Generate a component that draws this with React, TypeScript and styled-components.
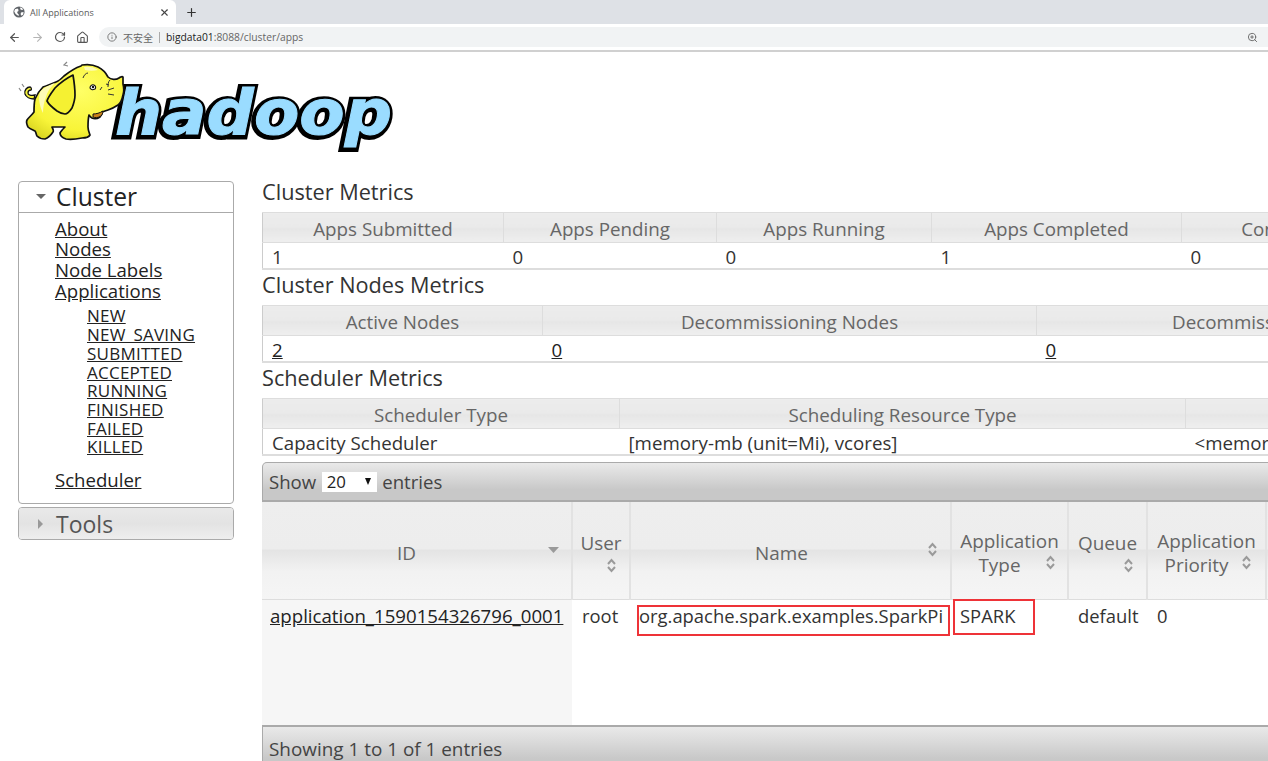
import React from "react";
import styled, { createGlobalStyle } from "styled-components";
import { ArrowLeft, ArrowRight, RotateCw, House, Info, ZoomIn, X, Plus } from "lucide-react";

const Global = createGlobalStyle`
  html, body { margin: 0; padding: 0; background: #fff; overflow: hidden; height: 761px; }
  body { font-family: "Open Sans", "Noto Sans", sans-serif; color: #333; }
`;

const Page = styled.div`
  width: 1268px;
  height: 761px;
  overflow: hidden;
  display: flex;
  flex-direction: column;
`;

const TabStrip = styled.div`
  height: 24px;
  background: #dee1e6;
  display: flex;
  align-items: flex-end;
  padding-left: 4px;
  gap: 9px;
  flex: none;
`;
const Tab = styled.div`
  width: 172px;
  height: 24px;
  background: #fff;
  border-radius: 6px 6px 0 0;
  display: flex;
  align-items: center;
  padding: 0 6px 0 9px;
  box-sizing: border-box;
  gap: 5px;
  font-size: 9px;
  color: #5a5a5a;
`;
const TabTitle = styled.span`
  flex: 1;
  padding-top: 1px;
`;
const NewTab = styled.div`
  height: 24px;
  display: flex;
  align-items: center;
  color: #333;
`;
const Toolbar = styled.div`
  height: 26px;
  flex: none;
  display: flex;
  align-items: center;
  padding: 0 0 0 8px;
  gap: 10px;
  border-bottom: 2px solid #d0d0d0;
  background: #fff;
`;
const NavIcons = styled.div`
  display: flex;
  align-items: center;
  gap: 10px;
  color: #555;
`;
const Omnibox = styled.div`
  flex: 1;
  height: 20px;
  border-radius: 10px 0 0 10px;
  background: #f1f3f4;
  display: flex;
  align-items: center;
  padding: 0 10px 0 8px;
  font-size: 10.3px;
  color: #666;
`;
const Secure = styled.span`
  font-family: "Noto Sans CJK SC", sans-serif;
  margin-left: 6px;
  padding-right: 6px;
  margin-right: 6px;
  border-right: 1px solid #aaa;
  line-height: 11px;
  font-size: 10px;
`;
const Host = styled.span`
  color: #222;
`;
const Url = styled.span`
  flex: 1;
`;

const LogoArea = styled.div`
  height: 129px;
  flex: none;
  padding: 8px 0 0 18px;
  box-sizing: border-box;
`;

const Body = styled.div`
  display: flex;
  align-items: flex-start;
  padding-left: 18px;
  gap: 28px;
  flex: 1;
  min-height: 0;
`;

const Side = styled.nav`
  width: 216px;
  flex: none;
  display: flex;
  flex-direction: column;
  gap: 3px;
`;
const SideBox = styled.div`
  border: 1px solid #aaa;
  border-radius: 4px;
  box-sizing: border-box;
  background: #fff;
`;
const SideHead = styled.div<{ $closed?: boolean }>`
  height: ${(p) => (p.$closed ? 31 : 30)}px;
  display: flex;
  align-items: center;
  padding-left: 17px;
  gap: ${(p) => (p.$closed ? 11 : 10)}px;
  font-size: ${(p) => (p.$closed ? 23 : 24.6)}px;
  line-height: 30px;
  color: ${(p) => (p.$closed ? "#555" : "#222")};
  ${(p) => (p.$closed
    ? "background: linear-gradient(#e9e9e9, #e3e3e3 50%, #eeeeee); border-radius: 3px;"
    : "border-bottom: 1px solid #aaa;")}
`;
const ArrowDown = styled.span`
  width: 0;
  height: 0;
  border-left: 5px solid transparent;
  border-right: 5px solid transparent;
  border-top: 5px solid #666;
  margin-top: -2px;
`;
const ArrowRightTri = styled.span`
  width: 0;
  height: 0;
  border-top: 5px solid transparent;
  border-bottom: 5px solid transparent;
  border-left: 5px solid #999;
  margin-left: 2px;
  margin-right: 2px;
`;
const MainLinks = styled.div`
  padding: 5.6px 0 12.4px 36px;
  display: flex;
  flex-direction: column;
  align-items: flex-start;
`;
const MainLink = styled.a`
  font-size: 18.6px;
  line-height: 20.7px;
  color: #222;
  text-decoration: underline;
`;
const SubLinks = styled.div`
  padding: 6px 0 13px 32px;
  display: flex;
  flex-direction: column;
  align-items: flex-start;
`;
const SubLink = styled.a`
  font-size: 17px;
  line-height: 18.7px;
  letter-spacing: 0.25px;
  color: #222;
  text-decoration: underline;
`;

const Main = styled.main`
  flex: 1;
  min-width: 0;
  display: flex;
  flex-direction: column;
  margin-top: -4px;
`;
const H = styled.h3`
  font-weight: 400;
  font-size: 21.7px;
  line-height: 30px;
  height: 35px;
  margin: 0;
  color: #333;
`;
const Table = styled.table`
  table-layout: fixed;
  border-collapse: collapse;
  border-spacing: 0;
  width: 1400px;
  border-left: 1px solid #ccc;
  border-bottom: 2px solid #ddd;
`;
const Col = styled.col<{ $w: number }>`
  width: ${(p) => p.$w}px;
`;
const Th = styled.th`
  height: 30px;
  box-sizing: border-box;
  padding: 3px 0 0;
  font-weight: 400;
  font-size: 18.8px;
  line-height: 22px;
  color: #666;
  text-align: center;
  white-space: nowrap;
  overflow: hidden;
  border-top: 1px solid #ddd;
  border-right: 1px solid #ddd;
  border-bottom: 1px solid #ddd;
  background: linear-gradient(#ececec, #eaeaea 48%, #e6e6e6 52%, #efefef);
`;
const Td = styled.td`
  height: 26px;
  box-sizing: border-box;
  padding: 3px 0 0 9px;
  font-size: 18.7px;
  line-height: 22px;
  color: #333;
  white-space: nowrap;
  overflow: hidden;
`;
const A = styled.a`
  color: #222;
  text-decoration: underline;
`;
const AppLink = styled(A)`
  font-size: 18.65px;
  margin-left: -1px;
`;
const Spacer = styled.div`
  height: 6px;
  flex: none;
`;
const Bar = styled.div<{ $top?: boolean }>`
  width: 1400px;
  box-sizing: border-box;
  border: 1px solid #aaa;
  border-width: ${(p) => (p.$top ? "1px 1px 2px 1px" : "2px 1px 0 1px")};
  border-radius: ${(p) => (p.$top ? "5px 5px 0 0" : "0")};
  height: ${(p) => (p.$top ? 40 : 46)}px;
  flex: none;
  display: flex;
  align-items: center;
  gap: ${(p) => (p.$top ? 5.5 : 6)}px;
  padding-left: 6px;
  font-size: ${(p) => (p.$top ? 18.6 : 18.9)}px;
  color: #444;
  background: linear-gradient(#e9e9e9, #d9d9d9 36%, #c8c8c8 72%, #c8c8c8);
`;
const Select = styled.div`
  width: 55px;
  height: 20px;
  background: #fff;
  display: flex;
  align-items: center;
  justify-content: space-between;
  box-sizing: border-box;
  padding: 0 6px 0 5px;
  font-size: 16.8px;
  color: #222;
`;
const SelectArrow = styled.span`
  width: 0;
  height: 0;
  border-left: 3.5px solid transparent;
  border-right: 3.5px solid transparent;
  border-top: 7px solid #111;
`;
const DataTable = styled.table`
  table-layout: fixed;
  border-collapse: collapse;
  width: 1400px;
`;
const DTh = styled.th`
  position: relative;
  height: 97px;
  padding: 6px 4px 0;
  font-weight: 400;
  font-size: 18.9px;
  line-height: 24px;
  color: #666;
  text-align: center;
  vertical-align: middle;
  border-right: 2px solid #e2e2e2;
  border-bottom: 1px solid #ddd;
  background: linear-gradient(#eeeeee, #ededed 48%, #e4e4e4 50%, #f2f2f2 72%, #f5f5f5);
  box-sizing: border-box;
`;
const HeadText = styled.span<{ $shift?: number; $down?: number }>`
  display: block;
  position: relative;
  left: ${(p) => p.$shift ?? 0}px;
  top: ${(p) => p.$down ?? 0}px;
`;
const SortIcon = styled.svg<{ $r: number; $t: number }>`
  position: absolute;
  right: ${(p) => p.$r}px;
  top: ${(p) => p.$t}px;
  color: #9a9a9a;
`;
const DTd = styled.td<{ $shade?: boolean; $pad?: number }>`
  position: relative;
  height: 126px;
  vertical-align: top;
  padding: 3px 0 0 ${(p) => p.$pad ?? 10}px;
  font-size: 18.4px;
  line-height: 26px;
  color: #333;
  white-space: nowrap;
  overflow: visible;
  background: ${(p) => (p.$shade ? "#f6f6f6" : "#fff")};
  box-sizing: border-box;
`;
const RedBox = styled.span<{ $l: number; $t: number; $w: number; $h: number }>`
  position: absolute;
  left: ${(p) => p.$l}px;
  top: ${(p) => p.$t}px;
  width: ${(p) => p.$w}px;
  height: ${(p) => p.$h}px;
  border: 2px solid #ee3338;
  box-sizing: border-box;
`;

const Sort = ({ r, t }: { r: number; t: number }) => (
  <SortIcon $r={r} $t={t} width="11" height="15" viewBox="0 0 11 15" fill="none" stroke="currentColor" strokeWidth="2">
    <path d="M2 6l3.500-4L9 6M2 9l3.500 4L9 9" />
  </SortIcon>
);

const Favicon = () => (
  <svg width="12" height="12" viewBox="0 0 12 12">
    <circle cx="6" cy="6" r="5.600" fill="#5f6368" />
    <path d="M2 3.200l2.600-.6 1 1.300-.5 1.500-1 .3.4 1.600 1.400 1.400-.4 1.400L2.600 8 1.200 5.400zM7 1.600l2 .4 1.200 1.600-1.200.4-1.500-.6zM8 6.400l2.600-.4-.4 2.400-1.600 1.400-1-1.600z" fill="#fff" />
  </svg>
);

const Logo = () => (
  <svg width="378" height="94" viewBox="18 60 378 94">
    <defs>
      <radialGradient id="hide" cx="0.55" cy="0.35" r="0.75">
        <stop offset="0" stopColor="#ffff66" />
        <stop offset="0.7" stopColor="#f8f438" />
        <stop offset="1" stopColor="#d8d420" />
      </radialGradient>
    </defs>
    <g fontFamily="'DejaVu Sans', sans-serif" fontWeight="700" fontStyle="italic">
      <text x="115" y="134" fontSize="62" textLength="277" lengthAdjust="spacingAndGlyphs" fill="#000" stroke="#000" strokeWidth="8" strokeLinejoin="miter" transform="translate(-1 1)">hadoop</text>
      <text x="115" y="134" fontSize="62" textLength="277" lengthAdjust="spacingAndGlyphs" fill="#9adcff" stroke="#9adcff" strokeWidth="1">hadoop</text>
    </g>
    <path d="M34 99c-4 0-8-2-9-5-1-4 2-7 5-7 1 0 2 2 1 3-2 0-3 1-3 3 0 2 3 3 7 2z" fill="#f6f23c" stroke="#111" strokeWidth="1.300" />
    <path d="M82 65c6-1 12 0 16 2 4 2 8 6 10 10 3 3 8 3 11 1 2-1 3-2 4-1 0 2 0 5 0 7 1 4 1 8 0 11-1 5-2 8-5 10-3 2-7 4-10 5l-6 2c0 2-1 4-2 5-3 2-6 2-8 1-2-1-2-2-3-3-1 4-1 8-1 12 0 3 1 5 2 8-1 2-5 3-8 3-5 1-11 2-16 1-3-1-6-3-6-6 1-2 3-4 5-6-4 0-9 0-13 0 1 2 2 4 1 5-2 3-5 6-8 7-3 0-6-1-8-3-1-2-1-4-2-5-2-1-5-2-7-4-1-2-2-5-1-7 2-3 5-5 7-8 0-5 0-9 1-13 2-5 5-9 8-12 5-2 9-3 13-5 3-1 6-4 8-6 5-4 11-8 17-10z" fill="url(#hide)" stroke="#111" strokeWidth="1.700" strokeLinejoin="round" />
    <path d="M40 92c3-4 9-7 15-9-5 5-8 9-9 14-2 5-3 10-3 16-3-6-5-14-3-21zM84 67c5-1 10 0 14 3-4 1-9 1-13 0z" fill="#fdfbb8" />
    <path d="M73 75c-6 3-13 8-18 13-3 4-7 9-8 13 2 4 6 7 10 10 3 2 6 3 8 3 3 0 5-3 7-6 2-5 3-9 3-13 0-7-1-14-2-20z" fill="#f5f132" stroke="#111" strokeWidth="1.700" strokeLinejoin="round" />
    <path d="M93 114c3 0 7-1 10-3 0 2-1 4-2 5-3 2-6 2-8 1z" fill="#c9801a" stroke="#111" strokeWidth="1" />
    <path d="M90 88c0-2 2-4 4-3 2 1 2 3 1 4-2 1-4 1-5-1z" fill="#fff" stroke="#111" strokeWidth="1.100" />
    <circle cx="93" cy="87" r="1.200" fill="#111" />
    <path d="M83 78c1-3 3-5 5-5M110 80c-2 2-2 4-2 7M108 90l6-2M108 94l6 1M106 84l3 1M100 90l2-3" fill="none" stroke="#333" strokeWidth="1" />
    <path d="M68 66l-4-1 3-3M21 91l-2-3M24 87l-2-3" fill="none" stroke="#888" strokeWidth="1.200" />
  </svg>
);

const metric1 = [241, 213, 215, 250, 292, 189];
const metric2 = [280, 494, 484, 142];
const metric3 = [357, 566, 477];

export default function App() {
  return (
    <Page>
      <Global />
      <TabStrip>
        <Tab>
          <Favicon />
          <TabTitle>All Applications</TabTitle>
          <X size={11} color="#444" strokeWidth={2.4} />
        </Tab>
        <NewTab>
          <Plus size={13} strokeWidth={2.2} />
        </NewTab>
      </TabStrip>
      <Toolbar>
        <NavIcons>
          <ArrowLeft size={13} strokeWidth={2.2} />
          <ArrowRight size={13} strokeWidth={2} color="#b5b5b5" />
          <RotateCw size={12} strokeWidth={2.4} />
          <House size={13} strokeWidth={2} />
        </NavIcons>
        <Omnibox>
          <Info size={10} strokeWidth={2} />
          <Secure>不安全</Secure>
          <Url>
            <Host>bigdata01</Host>:8088/cluster/apps
          </Url>
          <ZoomIn size={11} strokeWidth={2} />
        </Omnibox>
      </Toolbar>
      <LogoArea>
        <Logo />
      </LogoArea>
      <Body>
        <Side>
          <SideBox>
            <SideHead>
              <ArrowDown />
              Cluster
            </SideHead>
            <MainLinks>
              <MainLink>About</MainLink>
              <MainLink>Nodes</MainLink>
              <MainLink>Node Labels</MainLink>
              <MainLink>Applications</MainLink>
              <SubLinks>
                {["NEW", "NEW_SAVING", "SUBMITTED", "ACCEPTED", "RUNNING", "FINISHED", "FAILED", "KILLED"].map((s) => (
                  <SubLink key={s}>{s}</SubLink>
                ))}
              </SubLinks>
              <MainLink>Scheduler</MainLink>
            </MainLinks>
          </SideBox>
          <SideBox>
            <SideHead $closed>
              <ArrowRightTri />
              Tools
            </SideHead>
          </SideBox>
        </Side>
        <Main>
          <H>Cluster Metrics</H>
          <Table>
            <colgroup>{metric1.map((w, i) => <Col key={i} $w={w} />)}</colgroup>
            <thead>
              <tr>
                <Th>Apps Submitted</Th>
                <Th>Apps Pending</Th>
                <Th>Apps Running</Th>
                <Th>Apps Completed</Th>
                <Th>Containers Running</Th>
                <Th>Memory Used</Th>
              </tr>
            </thead>
            <tbody>
              <tr>
                <Td>1</Td>
                <Td>0</Td>
                <Td>0</Td>
                <Td>1</Td>
                <Td>0</Td>
                <Td>0 B</Td>
              </tr>
            </tbody>
          </Table>
          <H>Cluster Nodes Metrics</H>
          <Table>
            <colgroup>{metric2.map((w, i) => <Col key={i} $w={w} />)}</colgroup>
            <thead>
              <tr>
                <Th>Active Nodes</Th>
                <Th>Decommissioning Nodes</Th>
                <Th>Decommissioned Nodes</Th>
                <Th>Lost Nodes</Th>
              </tr>
            </thead>
            <tbody>
              <tr>
                <Td><A>2</A></Td>
                <Td><A>0</A></Td>
                <Td><A>0</A></Td>
                <Td><A>0</A></Td>
              </tr>
            </tbody>
          </Table>
          <H>Scheduler Metrics</H>
          <Table>
            <colgroup>{metric3.map((w, i) => <Col key={i} $w={w} />)}</colgroup>
            <thead>
              <tr>
                <Th>Scheduler Type</Th>
                <Th>Scheduling Resource Type</Th>
                <Th>Minimum Allocation</Th>
              </tr>
            </thead>
            <tbody>
              <tr>
                <Td>Capacity Scheduler</Td>
                <Td>[memory-mb (unit=Mi), vcores]</Td>
                <Td>&lt;memory:1024, vCores:1&gt;</Td>
              </tr>
            </tbody>
          </Table>
          <Spacer />
          <Bar $top>
            Show
            <Select>
              20
              <SelectArrow />
            </Select>
            entries
          </Bar>
          <DataTable>
            <colgroup>
              {[310, 58, 321, 117, 79, 119, 396].map((w, i) => <Col key={i} $w={w} />)}
            </colgroup>
            <thead>
              <tr>
                <DTh>
                  <HeadText $shift={-10}>ID</HeadText>
                  <SortIcon $r={12} $t={45} width="11" height="7" viewBox="0 0 11 7">
                    <path d="M0 0h11L5.500 6z" fill="currentColor" />
                  </SortIcon>
                </DTh>
                <DTh>
                  <HeadText $down={2}>User</HeadText>
                  <HeadText>&nbsp;</HeadText>
                  <Sort r={12} t={56} />
                </DTh>
                <DTh>
                  <HeadText $shift={-9}>Name</HeadText>
                  <Sort r={12} t={40} />
                </DTh>
                <DTh>
                  Application
                  <HeadText $shift={-10}>Type</HeadText>
                  <Sort r={11} t={53} />
                </DTh>
                <DTh>
                  <HeadText $down={2}>Queue</HeadText>
                  <HeadText>&nbsp;</HeadText>
                  <Sort r={12} t={56} />
                </DTh>
                <DTh>
                  Application
                  <HeadText $shift={-10}>Priority</HeadText>
                  <Sort r={13} t={53} />
                </DTh>
                <DTh>Start Time</DTh>
              </tr>
            </thead>
            <tbody>
              <tr>
                <DTd $shade $pad={9}><AppLink>application_1590154326796_0001</AppLink></DTd>
                <DTd>root</DTd>
                <DTd $pad={9}>
                  org.apache.spark.examples.SparkPi
                  <RedBox $l={7} $t={5} $w={313} $h={31} />
                </DTd>
                <DTd $pad={9}>
                  SPARK
                  <RedBox $l={2} $t={-1} $w={82} $h={36} />
                </DTd>
                <DTd>default</DTd>
                <DTd>0</DTd>
                <DTd />
              </tr>
            </tbody>
          </DataTable>
          <Bar>Showing 1 to 1 of 1 entries</Bar>
        </Main>
      </Body>
    </Page>
  );
}
